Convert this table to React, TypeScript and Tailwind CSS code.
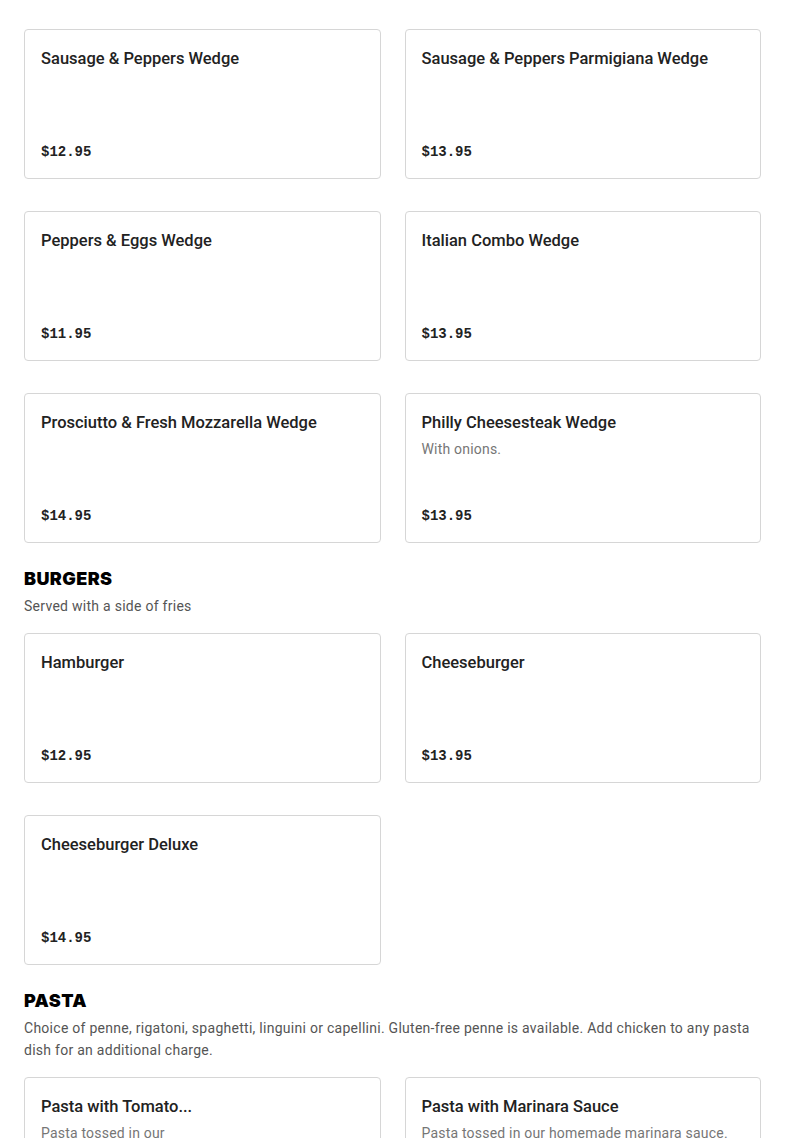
const sections = [
  {
    title: "",
    desc: "",
    items: [
      { name: "Sausage & Peppers Wedge", price: "$12.95" },
      { name: "Sausage & Peppers Parmigiana Wedge", price: "$13.95" },
      { name: "Peppers & Eggs Wedge", price: "$11.95" },
      { name: "Italian Combo Wedge", price: "$13.95" },
      { name: "Prosciutto & Fresh Mozzarella Wedge", price: "$14.95" },
      { name: "Philly Cheesesteak Wedge", desc: "With onions.", price: "$13.95" },
    ],
  },
  {
    title: "BURGERS",
    desc: "Served with a side of fries",
    items: [
      { name: "Hamburger", price: "$12.95" },
      { name: "Cheeseburger", price: "$13.95" },
      { name: "Cheeseburger Deluxe", price: "$14.95" },
    ],
  },
  {
    title: "PASTA",
    desc: "Choice of penne, rigatoni, spaghetti, linguini or capellini. Gluten-free penne is available. Add chicken to any pasta dish for an additional charge.",
    items: [
      { name: "Pasta with Tomato...", desc: "Pasta tossed in our homemade tomato sauce with fresh basil.", price: "$13.95", narrow: true },
      { name: "Pasta with Marinara Sauce", desc: "Pasta tossed in our homemade marinara sauce.", price: "$13.95" },
    ],
  },
];

type Item = { name: string; desc?: string; price: string; narrow?: boolean };

function Card({ item }: { item: Item }) {
  return (
    <div className="h-[150px] border border-[#d6d6d6] rounded-[4px] px-4 pt-[17px] pb-[14px] flex flex-col bg-white">
      <div className="text-[16.5px] leading-6 font-medium text-[#222]">{item.name}</div>
      {item.desc && (
        <div className={`mt-[3px] text-[14px] leading-[22px] tracking-[0.2px] text-[#767676] ${item.narrow ? "max-w-[140px]" : ""}`}>
          {item.desc}
        </div>
      )}
      <div className="mt-auto text-[14px] leading-6 font-bold text-[#222] font-['Liberation_Mono',monospace]">
        {item.price}
      </div>
    </div>
  );
}

export default function App() {
  return (
    <main className="bg-white min-h-screen px-6 pt-[29px] font-['Roboto',sans-serif] overflow-hidden h-[1138px]">
      {sections.map((s, i) => (
        <section key={i} className={i > 0 ? "mt-6" : ""}>
          {s.title && (
            <>
              <h2 className="text-[18px] leading-6 font-black text-black tracking-[0.4px] font-['Inter',sans-serif]">{s.title}</h2>
              <p className="mt-1 mb-4 text-[14px] leading-[22px] tracking-[0.27px] text-[#555]">{s.desc}</p>
            </>
          )}
          <div className="grid grid-cols-2 gap-x-6 gap-y-8">
            {s.items.map((it) => (
              <Card key={it.name} item={it} />
            ))}
          </div>
        </section>
      ))}
    </main>
  );
}
